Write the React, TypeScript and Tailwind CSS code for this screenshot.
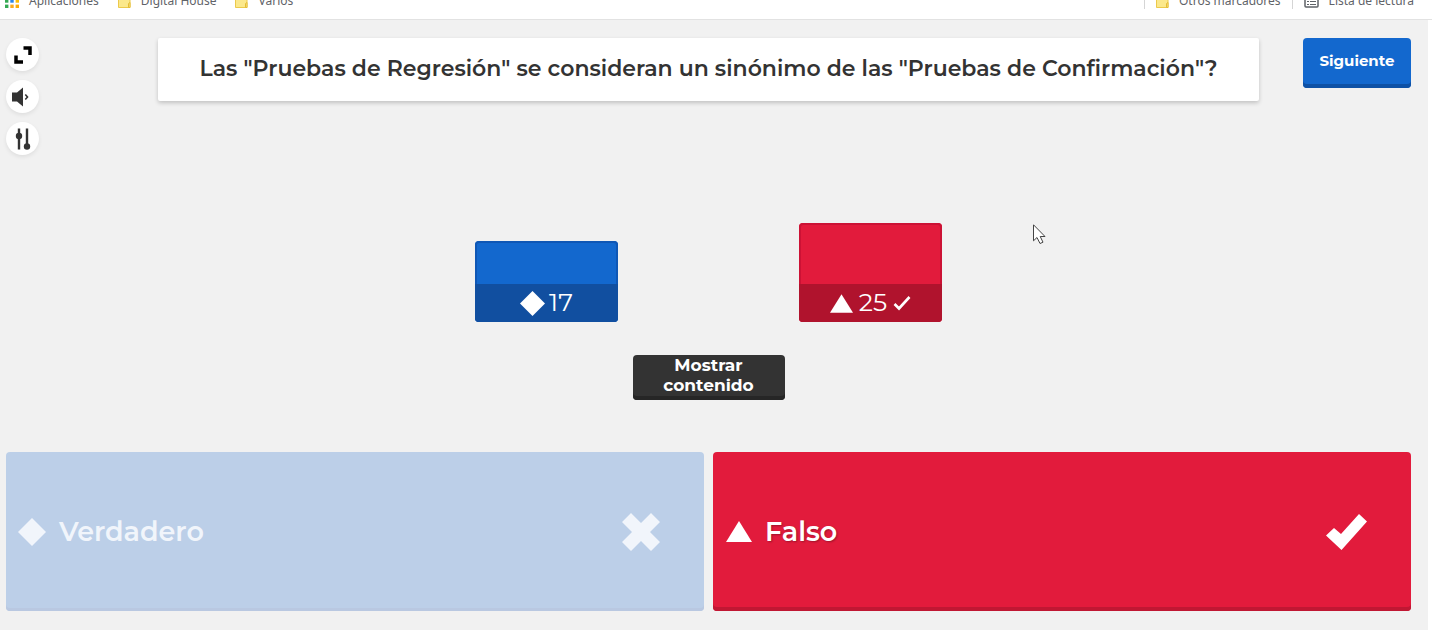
import type { ReactNode } from "react";

const GRID_COLORS = [
  "#ea4335", "#ea4335", "#fbbc04",
  "#34a853", "#2a85e8", "#fbbc04",
  "#34a853", "#f9ab20", "#fbab04",
];

function AppsIcon() {
  return (
    <svg width="14" height="14" viewBox="0 0 14 14" aria-hidden="true">
      {GRID_COLORS.map((color, i) => (
        <rect key={i} x={(i % 3) * 5.3} y={Math.floor(i / 3) * 5.3} width="3.400" height="3.400" fill={color} />
      ))}
    </svg>
  );
}

function FolderIcon() {
  return (
    <svg width="13" height="14" viewBox="0 0 13 14" aria-hidden="true">
      <path d="M.5 1h5l1.500 2h5v10.500H.5z" fill="#fbe88b" stroke="#ecc94b" />
      <path d="M10.500 13.500V9.500l1.500-1v5z" fill="#fbe88b" stroke="#e5bd35" />
    </svg>
  );
}

function ReadingListIcon() {
  return (
    <svg width="15" height="14" viewBox="0 0 15 14" fill="none" stroke="#5f6368" aria-hidden="true">
      <rect x="1" y="1" width="13" height="12" rx="1" strokeWidth="1.500" />
      <path d="M3 4.500h2M6 4.500h6M3 7.500h2M6 7.500h6M3 10.500h2M6 10.500h6" />
    </svg>
  );
}

function Bookmark({ icon, children }: { icon: ReactNode; children: ReactNode }) {
  return (
    <a href="#" className="flex items-end gap-2.5 whitespace-nowrap">
      <span className="mb-px">{icon}</span>
      {children}
    </a>
  );
}

function Diamond({ className }: { className: string }) {
  return (
    <svg viewBox="0 0 28 28" className={className} fill="currentColor" aria-hidden="true">
      <path d="M14 0 28 14 14 28 0 14z" />
    </svg>
  );
}

function Triangle({ className }: { className: string }) {
  return (
    <svg viewBox="0 0 26 21" className={className} fill="currentColor" aria-hidden="true">
      <path d="M13 0 26 21H0z" />
    </svg>
  );
}

function RoundButton({ label, children }: { label: string; children: ReactNode }) {
  return (
    <button
      type="button"
      aria-label={label}
      className="flex size-[33px] items-center justify-center rounded-full bg-white text-[#333] shadow-[0_2px_4px_rgba(0,0,0,0.08)]"
    >
      {children}
    </button>
  );
}

export default function App() {
  return (
    <div className="min-h-screen bg-white font-['Montserrat','Inter',sans-serif] text-[#333]">
      <nav className="flex h-5 items-end justify-between overflow-hidden border-b border-[#e2e2e2] bg-white pr-[18px] pb-2.5 pl-[5px] font-['Noto_Sans','Open_Sans',sans-serif] text-xs leading-4 text-[#5f6368]">
        <div className="flex items-end gap-[19px]">
          <Bookmark icon={<AppsIcon />}>Aplicaciones</Bookmark>
          <Bookmark icon={<FolderIcon />}>Digital House</Bookmark>
          <Bookmark icon={<FolderIcon />}>Varios</Bookmark>
        </div>
        <div className="flex items-end gap-[11px]">
          <span className="h-4 w-px bg-[#d5d5d5]" />
          <Bookmark icon={<FolderIcon />}>Otros marcadores</Bookmark>
          <span className="h-4 w-px bg-[#d5d5d5]" />
          <Bookmark icon={<ReadingListIcon />}>Lista de lectura</Bookmark>
        </div>
      </nav>

      <main className="relative mr-1 bg-[#f1f1f1] pt-[18px] pr-[17px] pb-[19px] pl-1.5">
        <div className="flex items-start">
          <div className="flex flex-col gap-[9px]">
            <RoundButton label="Pantalla completa">
              <svg width="18" height="18" viewBox="0 0 18 18" fill="none" stroke="#000" strokeWidth="3.500" aria-hidden="true">
                <path d="M9.500 2h6.500v7M2 9.500v6.500h7" />
              </svg>
            </RoundButton>
            <RoundButton label="Volumen">
              <svg width="21" height="20" viewBox="0 0 21 20" fill="currentColor" aria-hidden="true">
                <path d="M0 5.500h5L11 .5v19l-6-5H0z" />
                <path d="m13.300 7.500 2.200 2.500-2.200 2.500" fill="none" stroke="currentColor" strokeWidth="1.600" />
              </svg>
            </RoundButton>
            <RoundButton label="Ajustes">
              <svg width="16" height="22" viewBox="0 0 16 22" aria-hidden="true">
                <path d="M4 .5v21M12 .5v18" stroke="currentColor" strokeWidth="2.400" />
                <circle cx="4" cy="8" r="3.200" fill="currentColor" />
                <circle cx="12" cy="18.500" r="3.200" fill="currentColor" />
              </svg>
            </RoundButton>
          </div>
          <h1 className="mr-11 ml-[119px] flex-1 rounded-xs bg-white px-4 pt-[15px] pb-4 text-center text-[22px] leading-8 font-semibold shadow-[0_2px_4px_rgba(0,0,0,0.2)]">
            Las "Pruebas de Regresión" se consideran un sinónimo de las "Pruebas de Confirmación"?
          </h1>
          <button
            type="button"
            className="w-[108px] rounded bg-[#1368ce] pt-[13px] pb-[17px] text-[15px] leading-5 font-bold text-white shadow-[inset_0_-4px_0_#0e51a5]"
          >
            Siguiente
          </button>
        </div>

        <section aria-label="Resultados" className="flex h-[167px] items-end justify-center gap-[181px] text-[25px] text-white">
          <div className="flex h-[81px] w-[143px] flex-col justify-end overflow-hidden rounded bg-[#1368ce] shadow-[inset_0_0_0_2px_#0f57b5]">
            <div className="flex h-[38px] items-center justify-center gap-1 bg-[#114fa0]">
              <Diamond className="size-[25px]" />
              <span>17</span>
            </div>
          </div>
          <div className="flex h-[99px] w-[143px] flex-col justify-end overflow-hidden rounded bg-[#e21b3c] shadow-[inset_0_0_0_2px_#cc1235]">
            <div className="flex h-[38px] items-center justify-center gap-1.5 bg-[#b0132d]">
              <Triangle className="h-[19px] w-[23px]" />
              <span>25</span>
              <svg width="18" height="16" viewBox="0 0 18 16" fill="none" stroke="currentColor" strokeWidth="2.600" aria-hidden="true">
                <path d="M1.500 9 6 13.500 16.500 2" />
              </svg>
            </div>
          </div>
        </section>

        <div className="mt-[33px] flex justify-center">
          <button
            type="button"
            className="w-[152px] rounded bg-[#333] px-6 pb-[5px] text-[17px] leading-5 font-bold text-white shadow-[inset_0_-4px_0_#262626]"
          >
            Mostrar contenido
          </button>
        </div>

        <section aria-label="Respuestas" className="mt-[52px] grid grid-cols-2 gap-[9px] text-[27px] leading-9 font-semibold text-white">
          <div className="flex h-[159px] items-center rounded bg-[#bccfe8] pr-11 pl-3 text-[#f1f5fb] shadow-[inset_0_-3px_0_#b9c8e1]">
            <Diamond className="size-7" />
            <span className="ml-[13px] flex-1">Verdadero</span>
            <svg width="38" height="38" viewBox="0 0 38 38" fill="currentColor" role="img" aria-label="Incorrecto">
              <path d="M9 0 19 10 29 0 38 9 28 19 38 29 29 38 19 28 9 38 0 29 10 19 0 9z" />
            </svg>
          </div>
          <div className="flex h-[159px] items-center rounded bg-[#e21b3c] pr-11 pl-[13px] shadow-[inset_0_-4px_0_#c01733]">
            <Triangle className="h-[21px] w-[26px]" />
            <span className="ml-[13px] flex-1 [text-shadow:1px_1px_2px_rgba(0,0,0,0.3)]">Falso</span>
            <svg width="41" height="36" viewBox="0 0 41 36" fill="currentColor" role="img" aria-label="Correcto">
              <path d="M0 21.500 8 14 15 20 33 0 41 7.500 15.500 36z" />
            </svg>
          </div>
        </section>

        <svg className="absolute top-[204px] left-[1033px]" width="14" height="21" viewBox="0 0 14 21" aria-hidden="true">
          <path d="M.5.8v16l3.500-3.300 3 6 3-1.300-2.800-5.700h4.800z" fill="#fff" stroke="#444" />
        </svg>
      </main>
    </div>
  );
}
